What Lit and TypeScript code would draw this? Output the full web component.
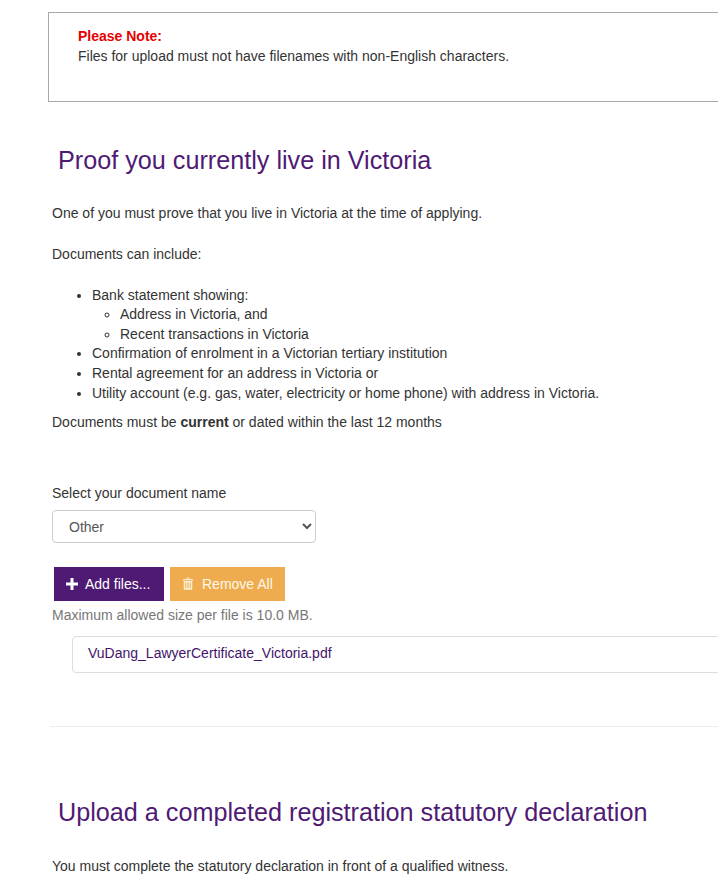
import { LitElement, html, css } from "lit";
import { customElement } from "lit/decorators.js";

@customElement("app-root")
export class AppRoot extends LitElement {
  static styles = css`
    :host {
      display: block;
      width: 718px;
      height: 895px;
      overflow: hidden;
      background: #fff;
      font-family: "Liberation Sans", Arial, sans-serif;
      font-size: 14px;
      line-height: 20px;
      color: #333;
    }
    .page {
      width: 780px;
      padding: 12px 0 0 52px;
      box-sizing: border-box;
    }
    p { margin: 0; }
    .note {
      margin-left: -4px;
      height: 90px;
      box-sizing: border-box;
      border: 1px solid #a9a9a9;
      padding: 13px 0 0 29px;
    }
    .note strong { display: block; color: #e60000; }
    h2 {
      margin: 0;
      padding-left: 6px;
      font-size: 25.2px;
      line-height: 30px;
      font-weight: 400;
      color: #4f1a74;
    }
    .h1 { margin-top: 43px; }
    .intro { margin-top: 28px; }
    .docs { margin-top: 21px; }
    ul { margin: 0; padding: 0; }
    li { line-height: 19.6px; }
    .outer { margin-top: 21.6px; padding-left: 40px; }
    .inner { padding-left: 28px; list-style: circle; }
    .current { margin-top: 8.4px; }
    .sel-label { margin-top: 51px; }
    select {
      display: block;
      margin-top: 7px;
      width: 264px;
      height: 33px;
      box-sizing: border-box;
      padding: 1px 12px 0;
      border: 1px solid #ccc;
      border-radius: 4px;
      background: #fff;
      font: inherit;
      color: #555;
    }
    .buttons {
      display: flex;
      gap: 6px;
      margin: 24px 0 0 2px;
    }
    .btn {
      display: flex;
      align-items: center;
      height: 34px;
      box-sizing: border-box;
      padding: 0 12px;
      color: #fff;
    }
    .btn svg { display: block; }
    .add { background: #4f1a74; width: 110px; gap: 7px; }
    .remove { background: #eeac4e; width: 115px; gap: 8px; color: #fff8ea; }
    .max { margin-top: 4px; color: #777; }
    .file {
      margin: 11px 0 0 20px;
      height: 37px;
      box-sizing: border-box;
      border: 1px solid #ddd;
      border-radius: 4px 0 0 4px;
      padding: 6px 15px;
      color: #44146a;
    }
    hr {
      margin: 53px 0 0 -2px;
      border: 0;
      border-top: 1px solid #eee;
    }
    .h2 { margin-top: 70px; }
    .witness { margin-top: 29px; }
  `;

  render() {
    return html`
      <div class="page">
        <div class="note">
          <strong>Please Note:</strong>
          Files for upload must not have filenames with non-English characters.
        </div>
        <h2 class="h1">Proof you currently live in Victoria</h2>
        <p class="intro">One of you must prove that you live in Victoria at the time of applying.</p>
        <p class="docs">Documents can include:</p>
        <ul class="outer">
          <li>Bank statement showing:
            <ul class="inner">
              <li>Address in Victoria, and</li>
              <li>Recent transactions in Victoria</li>
            </ul>
          </li>
          <li>Confirmation of enrolment in a Victorian tertiary institution</li>
          <li>Rental agreement for an address in Victoria or</li>
          <li>Utility account (e.g. gas, water, electricity or home phone) with address in Victoria.</li>
        </ul>
        <p class="current">Documents must be <strong>current</strong> or dated within the last 12 months</p>
        <p class="sel-label">Select your document name</p>
        <select><option>Other</option></select>
        <div class="buttons">
          <div class="btn add">
            <svg width="12" height="12" viewBox="0 0 12 12" fill="currentColor"><path d="M4.5 0h3v4.5H12v3H7.5V12h-3V7.5H0v-3h4.5z"/></svg>
            <span>Add files...</span>
          </div>
          <div class="btn remove">
            <svg width="12" height="13" viewBox="0 0 12 13" fill="currentColor">
              <path fill-opacity=".85" fill-rule="evenodd" d="M4.2 2 4.9.7C5 .5 5.2.4 5.4.4h1.2c.2 0 .4.1.5.3L7.8 2h2.9c.2 0 .3.1.3.3v.9H1v-.9c0-.2.1-.3.3-.3zm1-.0h1.6l-.4-.7h-.8zM1.7 4h8.6v7.8c0 .6-.4 1-1 1H2.7c-.6 0-1-.4-1-1zm1.6 1.4v5.6h.9V5.4zm2.2 0v5.6h1V5.4zm2.3 0v5.6h.9V5.4z"/>
            </svg>
            <span>Remove All</span>
          </div>
        </div>
        <p class="max">Maximum allowed size per file is 10.0 MB.</p>
        <div class="file">VuDang_LawyerCertificate_Victoria.pdf</div>
        <hr />
        <h2 class="h2">Upload a completed registration statutory declaration</h2>
        <p class="witness">You must complete the statutory declaration in front of a qualified witness.</p>
      </div>
    `;
  }
}
